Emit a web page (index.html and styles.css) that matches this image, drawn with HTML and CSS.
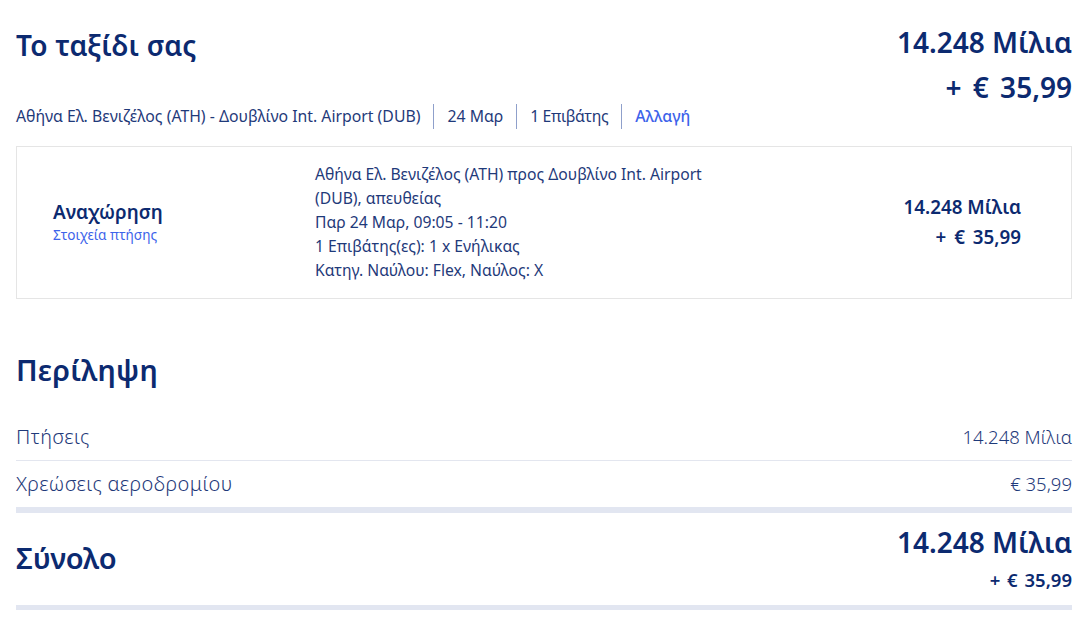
FILE: index.html
```html
<!DOCTYPE html>
<html lang="el">
<head>
<meta charset="utf-8">
<title>Το ταξίδι σας</title>
<link rel="stylesheet" href="styles.css">
</head>
<body>
<div class="page">
  <section class="trip">
    <div class="trip-head">
      <div class="trip-left">
        <h1 class="title">Το ταξίδι σας</h1>
        <div class="meta">
          <span class="meta-item first">Αθήνα Ελ. Βενιζέλος (ATH) - Δουβλίνο Int. Airport (DUB)</span>
          <span class="meta-item">24 Μαρ</span>
          <span class="meta-item tight">1 Επιβάτης</span>
          <a class="meta-item link" href="#">Αλλαγή</a>
        </div>
      </div>
      <div class="trip-price">
        <div>14.248 Μίλια</div>
        <div class="eur">+ € 35,99</div>
      </div>
    </div>

    <div class="card">
      <div class="card-left">
        <div class="card-title">Αναχώρηση</div>
        <a class="card-link" href="#">Στοιχεία πτήσης</a>
      </div>
      <div class="card-details">
        <div>Αθήνα Ελ. Βενιζέλος (ATH) προς Δουβλίνο Int. Airport (DUB), απευθείας</div>
        <div>Παρ 24 Μαρ, 09:05 - 11:20</div>
        <div>1 Επιβάτης(ες): 1 x Ενήλικας</div>
        <div>Κατηγ. Ναύλου: Flex, Ναύλος: X</div>
      </div>
      <div class="card-price">
        <div>14.248 Μίλια</div>
        <div class="eur">+ € 35,99</div>
      </div>
    </div>
  </section>

  <section class="summary">
    <h2 class="title">Περίληψη</h2>
    <div class="row">
      <span class="row-label">Πτήσεις</span>
      <span class="row-value">14.248 Μίλια</span>
    </div>
    <div class="row last">
      <span class="row-label">Χρεώσεις αεροδρομίου</span>
      <span class="row-value">€ 35,99</span>
    </div>
    <div class="total">
      <div class="total-label">Σύνολο</div>
      <div class="total-price">
        <div class="total-miles">14.248 Μίλια</div>
        <div class="total-eur">+ € 35,99</div>
      </div>
    </div>
  </section>
</div>
</body>
</html>
```

FILE: styles.css
```css
* { box-sizing: border-box; }

body {
  margin: 0;
  background: #ffffff;
  font-family: "Noto Sans", "DejaVu Sans", sans-serif;
  color: #1f3a7a;
}

.page {
  padding: 20px 16px 0 16px;
}

.title {
  margin: 0;
  font-size: 28px;
  font-weight: 600;
  line-height: 40px;
  color: #0c2a70;
  letter-spacing: 0.2px;
}

.trip-head {
  display: flex;
  justify-content: space-between;
  align-items: flex-start;
}

.trip-left .title {
  margin-top: 5px;
}

.meta {
  display: flex;
  align-items: center;
  margin-top: 39px;
  height: 25px;
  font-size: 15.8px;
}

.meta-item {
  padding: 0 13px;
  border-left: 1px solid #8fa0cb;
  line-height: 25px;
  color: #1f3a7a;
}

.meta-item.first {
  padding-left: 0;
  border-left: none;
}

.meta-item.tight {
  letter-spacing: -0.4px;
}

.meta-item.link {
  color: #3d63ea;
  text-decoration: none;
  font-weight: 500;
}

.trip-price {
  text-align: right;
  font-size: 28px;
  font-weight: 600;
  line-height: 45px;
  color: #0c2a70;
}

.trip-price .eur {
  word-spacing: 4px;
}

.card {
  margin-top: 17px;
  border: 1px solid #e5e5e5;
  display: grid;
  grid-template-columns: 262px 410px 1fr;
  align-items: center;
  padding: 15px 50px 16px 36px;
}

.card-title {
  font-size: 19px;
  font-weight: 600;
  color: #0c2a70;
  line-height: 26px;
}

.card-link {
  display: block;
  font-size: 13.6px;
  color: #3d63ea;
  text-decoration: none;
  line-height: 20px;
}

.card-details {
  font-size: 15.7px;
  line-height: 24px;
  padding-right: 10px;
}

.card-price {
  text-align: right;
  font-size: 18.8px;
  font-weight: 600;
  line-height: 30px;
  color: #0c2a70;
}

.card-price .eur {
  word-spacing: 3px;
}

.summary {
  margin-top: 51px;
}

.summary .title {
  font-size: 29px;
  margin-bottom: 24px;
}

.row {
  display: flex;
  justify-content: space-between;
  align-items: center;
  height: 47px;
  font-weight: 300;
  color: #1f3a7a;
  border-bottom: 1px solid #e3e6ef;
  padding-bottom: 1px;
}

.row-label {
  font-size: 20px;
  letter-spacing: 0.4px;
}

.row-value {
  font-size: 18.5px;
}

.row.last {
  border-bottom: 6px solid #e2e6f1;
  height: 52px;
}

.total {
  display: flex;
  justify-content: space-between;
  align-items: center;
  padding: 10px 0 6px 0;
  border-bottom: 5px solid #e2e6f1;
}

.total-label {
  font-size: 29px;
  font-weight: 600;
  color: #0c2a70;
  padding-bottom: 8px;
}

.total-price {
  text-align: right;
  color: #0c2a70;
  font-weight: 600;
}

.total-miles {
  font-size: 28px;
  line-height: 38px;
}

.total-eur {
  font-size: 18.5px;
  line-height: 38px;
  word-spacing: 2px;
}
```
